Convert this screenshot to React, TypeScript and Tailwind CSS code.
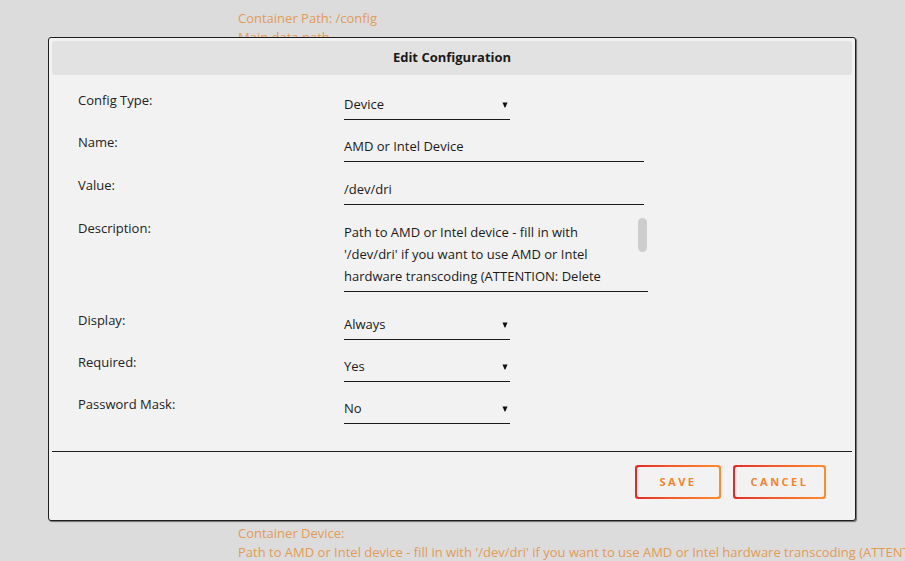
import React from "react"

const font = { fontFamily: '"Open Sans", "DejaVu Sans", sans-serif' }

function Arrow() {
  return (
    <svg width="6" height="7" viewBox="0 0 6 7" className="shrink-0 mt-[1px]">
      <path d="M0.5 1.5 H5.5 L3.4 6.5 H2.6 Z" fill="#111" />
    </svg>
  )
}

function Label({ children }: { children: React.ReactNode }) {
  return <div className="w-[266px] shrink-0 mt-[2px] text-[13px] leading-[18px] text-[#222]">{children}</div>
}

function SelectField({ value }: { value: string }) {
  return (
    <div className="w-[166px] h-[31px] border-b border-[#1a1a1a] flex items-center justify-between pr-[2px] text-[13px] text-[#1a1a1a]">
      <span className="pt-[2px]">{value}</span>
      <Arrow />
    </div>
  )
}

function TextField({ value }: { value: string }) {
  return (
    <div className="w-[300px] h-[31px] border-b border-[#1a1a1a] flex items-center text-[13px] text-[#1a1a1a]">
      <span className="pt-[2px]">{value}</span>
    </div>
  )
}

function Row({ label, children, className = "" }: { label: string; children: React.ReactNode; className?: string }) {
  return (
    <div className={"flex items-start " + className}>
      <Label>{label}</Label>
      {children}
    </div>
  )
}

function GradientButton({ text, width }: { text: string; width: string }) {
  return (
    <div className={"rounded-[3px] p-[2px] bg-gradient-to-r from-[#e22828] to-[#ff8c2f] " + width}>
      <div className="h-[30px] rounded-[2px] bg-[#f2f2f2] flex items-center justify-center pt-[1px] text-[11px] font-bold tracking-[2.5px] text-[#f5842f]">
        {text}
      </div>
    </div>
  )
}

export default function App() {
  return (
    <div className="relative w-[905px] h-[561px] overflow-hidden bg-[#dcdcdc]" style={font}>
      {/* page behind the dialog */}
      <div className="flex flex-col h-full pl-[238px] text-[13px] leading-[19px] text-[#e19b59]">
        <div className="pt-[9px]">
          <div>Container Path: /config</div>
          <div>Main data path</div>
        </div>
        <div className="mt-auto whitespace-nowrap">
          <div>Container Device:</div>
          <div className="h-[18px]">
            Path to AMD or Intel device - fill in with '/dev/dri' if you want to use AMD or Intel hardware transcoding (ATTENTION
          </div>
        </div>
      </div>

      {/* dialog */}
      <div className="absolute left-[48px] top-[37px] w-[808px] h-[484px] rounded-[3px] border border-[#1e1e1e] bg-[#f2f2f2] shadow-[1px_1px_1px_rgba(0,0,0,0.5)] flex flex-col">
        <div className="mx-[3px] mt-[3px] h-[34px] rounded-[3px] bg-[#e2e2e2] flex items-center justify-center text-[13px] font-bold text-[#1a1a1a]">
          Edit Configuration
        </div>

        <div className="flex flex-col pl-[29px] pt-[14px]">
          <Row label="Config Type:">
            <SelectField value="Device" />
          </Row>
          <Row label="Name:" className="mt-[11px]">
            <TextField value="AMD or Intel Device" />
          </Row>
          <Row label="Value:" className="mt-[12px]">
            <TextField value="/dev/dri" />
          </Row>
          <Row label="Description:" className="mt-[12px]">
            <div className="relative w-[304px] h-[75px] border-b border-[#1a1a1a] pt-[4px] overflow-hidden text-[13px] leading-[22px] text-[#1a1a1a] whitespace-nowrap">
              <div>Path to AMD or Intel device - fill in with</div>
              <div>'/dev/dri' if you want to use AMD or Intel</div>
              <div>hardware transcoding (ATTENTION: Delete</div>
              <div className="absolute right-[1px] top-[1px] w-[9px] h-[34px] rounded-full bg-[#cdcdcd]" />
            </div>
          </Row>
          <Row label="Display:" className="mt-[17px]">
            <SelectField value="Always" />
          </Row>
          <Row label="Required:" className="mt-[11px]">
            <SelectField value="Yes" />
          </Row>
          <Row label="Password Mask:" className="mt-[11px]">
            <SelectField value="No" />
          </Row>
        </div>

        <div className="mx-[3px] mt-[27px] border-t border-[#1e1e1e]" />

        <div className="flex justify-end gap-[12px] pr-[29px] pt-[13px]">
          <GradientButton text="SAVE" width="w-[86px]" />
          <GradientButton text="CANCEL" width="w-[93px]" />
        </div>
      </div>
    </div>
  )
}
